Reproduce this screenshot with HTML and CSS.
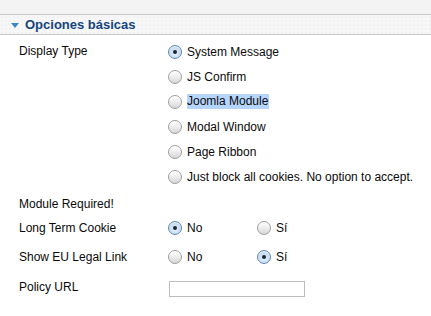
FILE: index.html
```html
<!DOCTYPE html>
<html>
<head>
<meta charset="utf-8">
<link rel="stylesheet" href="styles.css">
</head>
<body>
<div class="top"></div>
<div class="pane-header">
  <span class="caret"></span>
  <span class="pane-title">Opciones básicas</span>
</div>
<div class="form">
  <div class="field">
    <div class="label">Display Type</div>
    <div class="options">
      <div class="opt"><span class="radio checked"></span><span>System Message</span></div>
      <div class="opt"><span class="radio"></span><span>JS Confirm</span></div>
      <div class="opt"><span class="radio"></span><span class="selected">Joomla Module</span></div>
      <div class="opt"><span class="radio"></span><span>Modal Window</span></div>
      <div class="opt"><span class="radio"></span><span>Page Ribbon</span></div>
      <div class="opt"><span class="radio"></span><span>Just block all cookies. No option to accept.</span></div>
    </div>
  </div>
  <div class="row r-note"><div class="label">Module Required!</div></div>
  <div class="row r-long">
    <div class="label">Long Term Cookie</div>
    <div class="inline">
      <div class="opt col"><span class="radio checked"></span><span>No</span></div>
      <div class="opt"><span class="radio"></span><span>Sí</span></div>
    </div>
  </div>
  <div class="row r-eu">
    <div class="label">Show EU Legal Link</div>
    <div class="inline">
      <div class="opt col"><span class="radio"></span><span>No</span></div>
      <div class="opt"><span class="radio checked"></span><span>Sí</span></div>
    </div>
  </div>
  <div class="row r-url">
    <div class="label">Policy URL</div>
    <div class="text-input"></div>
  </div>
</div>
</body>
</html>
```

FILE: styles.css
```css
html, body {
  margin: 0;
  padding: 0;
  background: #fff;
}
body {
  font-family: "Liberation Sans", Arial, sans-serif;
  font-size: 12px;
  color: #0a0a0a;
}
.top {
  height: 14px;
  background: #f3f3f3;
}
.pane-header {
  height: 19px;
  border-top: 1px solid #cacaca;
  border-bottom: 1px solid #cacaca;
  background-color: #f7f7f7;
  background-image: radial-gradient(circle, #efefef 0.6px, transparent 0.9px);
  background-size: 4px 4px;
  display: flex;
  align-items: center;
  padding-left: 11px;
}
.caret {
  width: 0;
  height: 0;
  border-left: 4px solid transparent;
  border-right: 4px solid transparent;
  border-top: 5px solid #3b87c6;
  margin-top: 2px;
  margin-right: 6px;
}
.pane-title {
  font-weight: bold;
  font-size: 13px;
  color: #15457f;
  line-height: 19px;
}
.form {
  padding: 4px 0 0 19px;
}
.field {
  display: flex;
}
.label {
  width: 149px;
  flex: none;
  line-height: 24px;
}
.field .label {
  line-height: 25px;
}
.options {
  display: flex;
  flex-direction: column;
}
.opt {
  display: flex;
  align-items: center;
  height: 25px;
}
.radio {
  box-sizing: border-box;
  width: 14px;
  height: 14px;
  border-radius: 50%;
  border: 1px solid #9e9e9e;
  background: linear-gradient(#ffffff, #efefef 45%, #d6d6d6);
  box-shadow: inset 0 1px 1px rgba(255,255,255,0.9);
  margin-right: 5px;
  flex: none;
  display: flex;
  align-items: center;
  justify-content: center;
}
.radio.checked {
  border-color: #6384b3;
  background: radial-gradient(circle at 50% 60%, #eaf3fd, #c3dbf3 60%, #98bde6);
}
.radio.checked::after {
  content: "";
  width: 4px;
  height: 4px;
  border-radius: 50%;
  background: #1c2530;
}
.selected {
  background: #b5d5fe;
  line-height: 15px;
  padding: 0 1px 0 0;
}
.row {
  display: flex;
  align-items: center;
}
.r-note {
  margin-top: 3px;
  height: 24px;
}
.r-long {
  height: 24px;
}
.r-eu {
  margin-top: 5px;
  height: 24px;
}
.r-url {
  margin-top: 6px;
  height: 24px;
}
.inline {
  display: flex;
}
.inline .opt {
  height: 24px;
}
.inline .col {
  width: 89px;
}
.text-input {
  box-sizing: border-box;
  width: 136px;
  height: 16px;
  border: 1px solid #bdbdbd;
  background: #fff;
  margin-left: 1px;
  margin-top: 3px;
}
```
